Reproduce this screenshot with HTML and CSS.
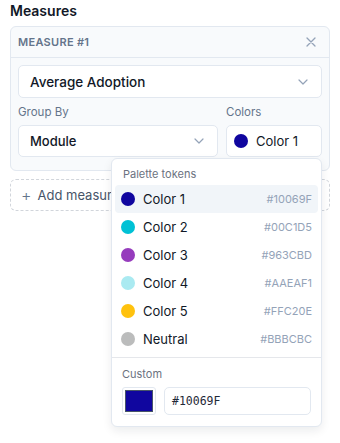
FILE: index.html
```html
<!DOCTYPE html>
<html lang="en">
<head>
  <meta charset="UTF-8" />
  <title>Measures</title>
  <link rel="stylesheet" href="styles.css">
</head>
<body>
  <h2 class="title">Measures</h2>

  <div class="card">
    <div class="card-head">
      <span>MEASURE #1</span>
      <svg class="close" width="12" height="12" viewBox="0 0 12 12"><path d="M2 2L10 10M10 2L2 10" stroke="#94a3b8" stroke-width="1.3" stroke-linecap="round"/></svg>
    </div>
    <div class="card-body">
      <div class="select big">
        <span>Average Adoption</span>
        <svg class="chev" width="10" height="6" viewBox="0 0 10 6"><path d="M1 1L5 5L9 1" fill="none" stroke="#94a3b8" stroke-width="1.2" stroke-linecap="round" stroke-linejoin="round"/></svg>
      </div>
      <div class="row">
        <div class="field grow">
          <label>Group By</label>
          <div class="select">
            <span>Module</span>
            <svg class="chev" width="10" height="6" viewBox="0 0 10 6"><path d="M1 1L5 5L9 1" fill="none" stroke="#94a3b8" stroke-width="1.2" stroke-linecap="round" stroke-linejoin="round"/></svg>
          </div>
        </div>
        <div class="field colors">
          <label>Colors</label>
          <div class="select color-btn">
            <span class="dot" style="background:#10069F"></span>
            <span>Color 1</span>
          </div>
          <div class="menu">
            <div class="menu-title">Palette tokens</div>
            <div class="opt active"><span class="dot" style="background:#10069F"></span><span class="name">Color 1</span><span class="hex">#10069F</span></div>
            <div class="opt"><span class="dot" style="background:#00C1D5"></span><span class="name">Color 2</span><span class="hex">#00C1D5</span></div>
            <div class="opt"><span class="dot" style="background:#963CBD"></span><span class="name">Color 3</span><span class="hex">#963CBD</span></div>
            <div class="opt"><span class="dot" style="background:#AAEAF1"></span><span class="name">Color 4</span><span class="hex">#AAEAF1</span></div>
            <div class="opt"><span class="dot" style="background:#FFC20E"></span><span class="name">Color 5</span><span class="hex">#FFC20E</span></div>
            <div class="opt"><span class="dot" style="background:#BBBCBC"></span><span class="name">Neutral</span><span class="hex">#BBBCBC</span></div>
            <div class="custom">
              <div class="menu-title">Custom</div>
              <div class="custom-row">
                <div class="swatch"><span style="background:#10069F"></span></div>
                <div class="hex-input">#10069F</div>
              </div>
            </div>
          </div>
        </div>
      </div>
    </div>
  </div>

  <div class="add">
    <span class="plus">+</span> Add measure
  </div>
</body>
</html>
```

FILE: styles.css
```css
body {
  margin: 0;
  padding: 0 10px;
  min-height: 443px;
  font-family: Inter, "Liberation Sans", sans-serif;
  background: #fff;
  color: #111827;
}
.title {
  margin: 0;
  padding-top: 2px;
  font-size: 14px;
  font-weight: 600;
  line-height: 18px;
  color: #111827;
}
.card {
  margin-top: 6px;
  border: 1px solid #e2e8f0;
  border-radius: 6px;
  background: #f8fafc;
}
.card-head {
  display: flex;
  justify-content: space-between;
  align-items: center;
  height: 30px;
  padding: 0 12px 0 7px;
  border-bottom: 1px solid #e2e8f0;
  font-size: 11px;
  font-weight: 600;
  letter-spacing: 0.3px;
  color: #64748b;
}
.card-body {
  padding: 7px 7px 13px;
}
.select {
  display: flex;
  align-items: center;
  justify-content: space-between;
  height: 30px;
  padding: 0 11px;
  background: #fff;
  border: 1px solid #e2e8f0;
  border-radius: 5px;
  font-size: 13px;
  font-weight: 500;
  color: #111827;
}
.select.big {
  height: 31px;
  font-size: 13.5px;
}
.chev {
  margin-right: 2px;
}
.row {
  display: flex;
  gap: 8px;
  margin-top: 6px;
}
.field label {
  display: block;
  font-size: 11.5px;
  color: #64748b;
  line-height: 16px;
  margin-bottom: 5px;
}
.grow {
  flex: 1;
}
.colors {
  width: 96px;
  position: relative;
}
.color-btn {
  justify-content: flex-start;
  gap: 8px;
  padding: 0 7px;
  font-weight: 400;
}
.dot {
  width: 14px;
  height: 14px;
  border-radius: 50%;
  flex: none;
}
.menu {
  position: absolute;
  top: 54px;
  right: 0;
  width: 211px;
  box-sizing: border-box;
  background: #fff;
  border: 1px solid #e2e8f0;
  border-radius: 6px;
  box-shadow: 0 4px 10px rgba(15, 23, 42, 0.08);
  padding: 3px 3px 0;
  z-index: 2;
  color: #111827;
}
.menu-title {
  font-size: 11px;
  color: #6b7280;
  padding: 5px 8px 4px;
}
.opt {
  display: flex;
  align-items: center;
  gap: 8px;
  height: 28px;
  padding: 0 6px;
  border-radius: 4px;
  font-size: 13px;
}
.opt.active {
  background: #f1f5f9;
}
.opt .name {
  flex: 1;
}
.hex {
  font-size: 11px;
  color: #94a3b8;
}
.custom {
  margin: 4px -3px 0;
  border-top: 1px solid #e5e7eb;
  padding: 7px 10px 11px;
}
.custom .menu-title {
  padding: 2px 0 6px;
}
.custom-row {
  display: flex;
  gap: 8px;
}
.swatch {
  width: 34px;
  height: 28px;
  box-sizing: border-box;
  border: 1px solid #e2e8f0;
  border-radius: 3px;
  padding: 3px;
}
.swatch span {
  display: block;
  width: 100%;
  height: 100%;
  outline: 1px solid #475569;
}
.hex-input {
  flex: 1;
  height: 28px;
  box-sizing: border-box;
  border: 1px solid #e2e8f0;
  border-radius: 5px;
  display: flex;
  align-items: center;
  padding: 0 7px;
  font-family: "DejaVu Sans Mono", "Liberation Mono", monospace;
  font-size: 11.5px;
  color: #1f2937;
}
.add {
  margin-top: 8px;
  height: 30px;
  border: 1px dashed #d1d5db;
  border-radius: 6px;
  display: flex;
  align-items: center;
  padding: 0 10px;
  font-size: 13px;
  color: #475569;
  gap: 6px;
}
.plus {
  font-size: 16px;
  font-weight: 300;
  color: #64748b;
}
```
